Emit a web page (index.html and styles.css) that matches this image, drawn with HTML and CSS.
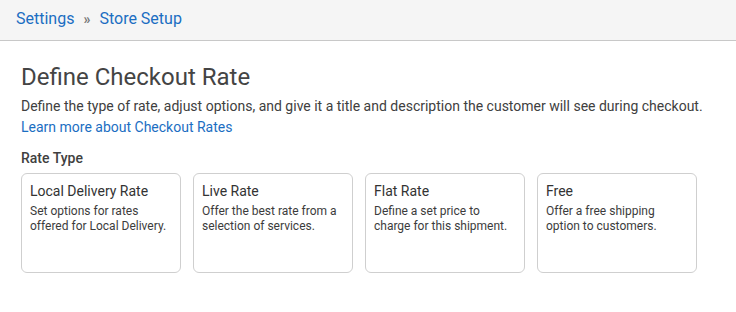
FILE: index.html
```html
<!DOCTYPE html>
<html>
<head>
<meta charset="utf-8">
<link rel="stylesheet" href="styles.css">
</head>
<body>
<header class="topbar">
  <nav class="crumbs">
    <a class="crumb" href="#">Settings</a>
    <span class="sep">»</span>
    <a class="crumb" href="#">Store Setup</a>
  </nav>
</header>
<main class="content">
  <h1 class="title">Define Checkout Rate</h1>
  <p class="lead">Define the type of rate, adjust options, and give it a title and description the customer will see during checkout.</p>
  <a class="learn" href="#">Learn more about Checkout Rates</a>
  <h2 class="section">Rate Type</h2>
  <div class="cards">
    <div class="card">
      <div class="card-title">Local Delivery Rate</div>
      <div class="card-desc">Set options for rates offered for Local Delivery.</div>
    </div>
    <div class="card">
      <div class="card-title">Live Rate</div>
      <div class="card-desc">Offer the best rate from a selection of services.</div>
    </div>
    <div class="card">
      <div class="card-title">Flat Rate</div>
      <div class="card-desc">Define a set price to charge for this shipment.</div>
    </div>
    <div class="card">
      <div class="card-title">Free</div>
      <div class="card-desc">Offer a free shipping option to customers.</div>
    </div>
  </div>
</main>
</body>
</html>
```
FILE: styles.css
```css
* { box-sizing: border-box; }
html, body { margin: 0; padding: 0; background: #fff; }
body { font-family: Roboto, "Noto Sans", sans-serif; color: #444; }
a { text-decoration: none; }

.topbar {
  height: 41px;
  background: #f5f5f5;
  border-bottom: 1px solid #c8c8c8;
  padding: 0 16px;
  display: flex;
  align-items: center;
}
.crumbs { display: flex; align-items: center; gap: 9px; font-size: 16px; line-height: 20px; margin-top: -2px; }
.crumb { color: #1b6ec2; }
.sep { color: #777; font-size: 14px; font-weight: bold; }

.content { padding: 22px 21px 0; }
.title { margin: 0; font-size: 24px; font-weight: 400; line-height: 28px; color: #444; }
.lead { margin: 5px 0 0; font-size: 14px; line-height: 20px; color: #404040; }
.learn { display: block; margin-top: 1px; font-size: 14px; line-height: 20px; color: #1b6ec2; }
.section { margin: 11px 0 0; font-size: 14px; font-weight: 500; line-height: 20px; color: #404040; }

.cards { display: flex; gap: 12px; margin-top: 5px; }
.card {
  width: 160px;
  height: 100px;
  border: 1px solid #cfcfcf;
  border-radius: 6px;
  padding: 8px 8px;
}
.card-title { font-size: 14px; line-height: 18px; color: #333; }
.card-desc { margin-top: 4px; font-size: 12px; line-height: 15px; color: #3c3c3c; }
```
